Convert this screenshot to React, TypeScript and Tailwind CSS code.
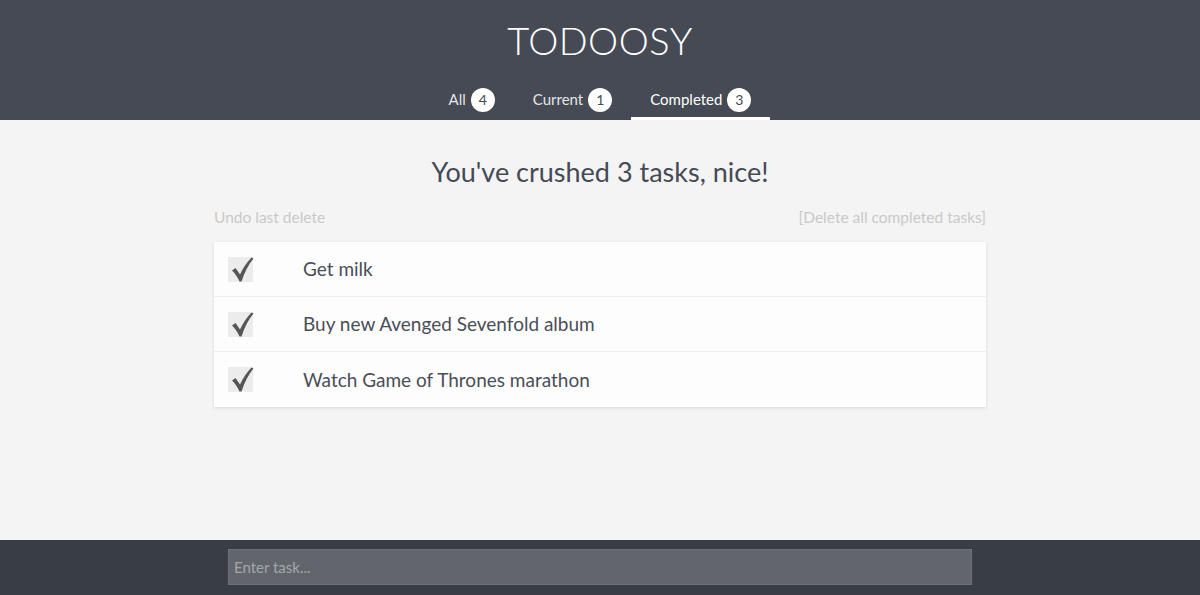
import React, { useState } from "react";

type Task = { id: number; text: string; done: boolean };

const initialTasks: Task[] = [
  { id: 1, text: "Get milk", done: true },
  { id: 2, text: "Buy new Avenged Sevenfold album", done: true },
  { id: 3, text: "Watch Game of Thrones marathon", done: true },
  { id: 4, text: "Learn React", done: false },
];

const font = { fontFamily: "Lato, 'Open Sans', sans-serif" };

const Check: React.FC = () => (
  <svg width="25" height="25" viewBox="0 0 25 25" className="block">
    <path d="M3 13.5 L6.5 11 L11 17.5 C14 11 18 5 22.5 0.5 L24.5 1.5 C19.5 7.5 15.5 15 12.5 24.5 L10.5 24.5 C8.5 20 6 16.5 3 13.5 Z" fill="#555" />
  </svg>
);

const App: React.FC = () => {
  const [tasks] = useState<Task[]>(initialTasks);
  const [tab, setTab] = useState<"all" | "current" | "completed">("completed");
  const completed = tasks.filter(t => t.done);

  const tabs = [
    { key: "all" as const, label: "All", count: tasks.length },
    { key: "current" as const, label: "Current", count: tasks.length - completed.length },
    { key: "completed" as const, label: "Completed", count: completed.length },
  ];

  return (
    <div className="h-[595px] bg-[#f4f4f4] flex flex-col" style={font}>
      <header className="bg-[#454a54] h-[120px] flex flex-col items-center">
        <h1 className="text-[38px] leading-none text-white font-light tracking-[0.5px] mt-[21px]">TODOOSY</h1>
        <nav className="flex mt-auto">
          {tabs.map(t => (
            <button
              key={t.key}
              onClick={() => setTab(t.key)}
              className={`flex items-center gap-[5px] px-[19px] h-[44px] pt-[6px] border-b-[3px] text-[15px] ${
                tab === t.key ? "border-white text-white" : "border-transparent text-[#e4e5e7]"
              }`}
            >
              {t.label}
              <span className="w-[24px] h-[24px] rounded-full bg-white text-[#454a54] text-[14px] flex items-center justify-center">
                {t.count}
              </span>
            </button>
          ))}
        </nav>
      </header>

      <main className="flex-1 flex flex-col items-center">
        <h2 className="text-[27px] text-[#454a54] mt-[38px] leading-none">You've crushed {completed.length} tasks, nice!</h2>
        <div className="w-[772px] flex justify-between text-[15.5px] text-[#c9c9c9] mt-[21px]">
          <button>Undo last delete</button>
          <button>[Delete all completed tasks]</button>
        </div>
        <ul className="w-[772px] bg-white shadow-[0_1px_3px_rgba(0,0,0,0.12)] mt-[13px]">
          {completed.map(t => (
            <li key={t.id} className="h-[55px] flex items-center border-b border-[#efefef] last:border-b-0 bg-[#fdfdfd]">
              <span className="ml-[14px] w-[25px] h-[25px] bg-[#ececec] relative">
                <span className="absolute left-[1px] top-[0px]">
                  <Check />
                </span>
              </span>
              <span className="ml-[50px] text-[19px] text-[#4a4e57]">{t.text}</span>
            </li>
          ))}
        </ul>
      </main>

      <footer className="bg-[#393e46] h-[55px] flex justify-center pt-[9px]">
        <input
          placeholder="Enter task..."
          className="w-[744px] h-[36px] bg-[#62666c] border border-[#6d7177] px-[5px] text-[15px] text-white placeholder:text-[#a3a6ab] outline-none"
        />
      </footer>
    </div>
  );
};

export default App;
